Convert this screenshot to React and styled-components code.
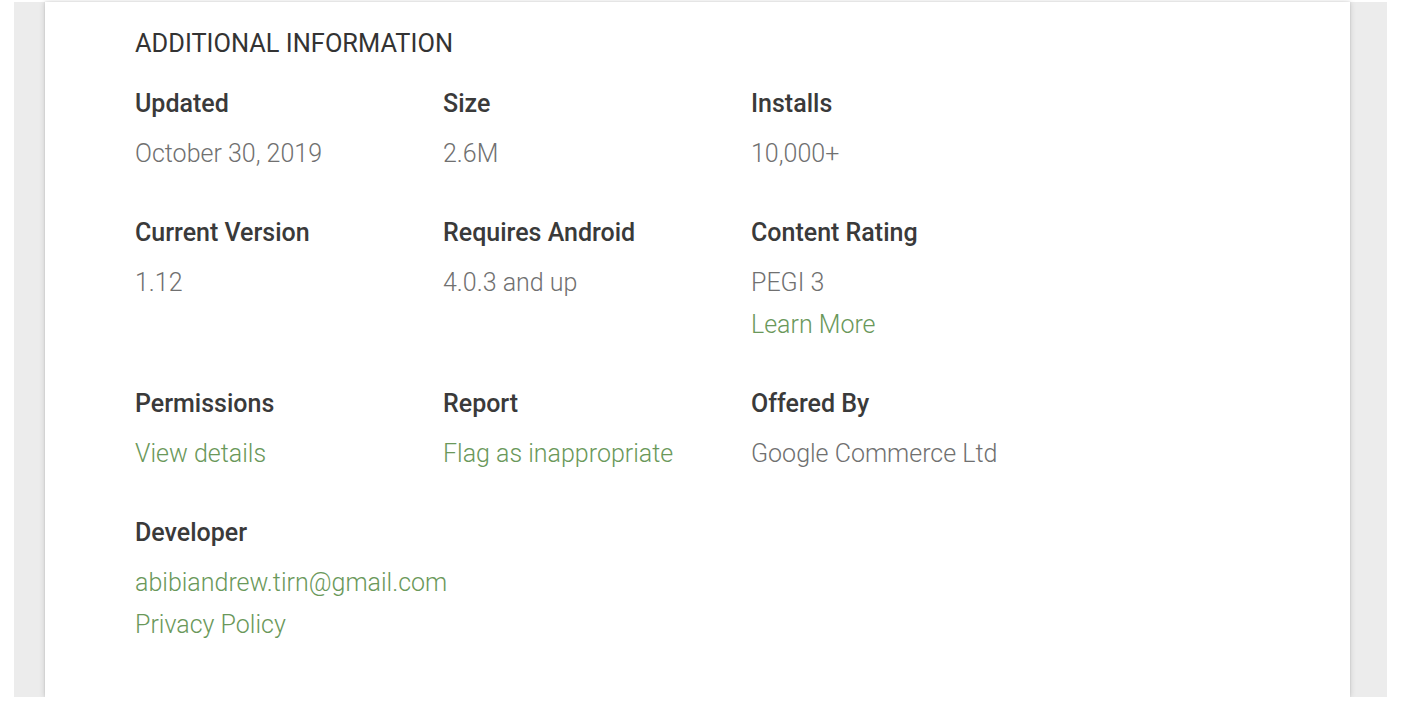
import React from 'react';
import styled, { createGlobalStyle } from 'styled-components';

const GlobalStyle = createGlobalStyle`
  html, body {
    margin: 0;
    padding: 0;
    background: #ffffff;
    font-family: Roboto, 'Liberation Sans', Arial, sans-serif;
  }
`;

const info = [
  { label: 'Updated', values: [{ text: 'October 30, 2019' }] },
  { label: 'Size', values: [{ text: '2.6M' }] },
  { label: 'Installs', values: [{ text: '10,000+' }] },
  { label: 'Current Version', values: [{ text: '1.12' }] },
  { label: 'Requires Android', values: [{ text: '4.0.3 and up' }] },
  {
    label: 'Content Rating',
    values: [{ text: 'PEGI 3' }, { text: 'Learn More', link: true }]
  },
  { label: 'Permissions', values: [{ text: 'View details', link: true }] },
  { label: 'Report', values: [{ text: 'Flag as inappropriate', link: true }] },
  { label: 'Offered By', values: [{ text: 'Google Commerce Ltd' }] },
  {
    label: 'Developer',
    values: [
      { text: 'abibiandrew.tirn@gmail.com', link: true },
      { text: 'Privacy Policy', link: true }
    ]
  }
];

function App() {
  return (
    <>
      <GlobalStyle />
      <PageBackdrop>
        <Card>
          <SectionTitle>Additional Information</SectionTitle>
          <InfoGrid>
            {info.map((item) => (
              <InfoCell key={item.label}>
                <Label>{item.label}</Label>
                {item.values.map((v) => (
                  <Value key={v.text} $link={v.link}>
                    {v.text}
                  </Value>
                ))}
              </InfoCell>
            ))}
          </InfoGrid>
        </Card>
      </PageBackdrop>
    </>
  );
}

const PageBackdrop = styled.div`
  margin: 2px 0 0 14px;
  width: 1373px;
  height: 695px;
  background: #ececec;
  display: flex;
  padding: 0 37px 0 31px;
  box-sizing: border-box;
`;

const Card = styled.section`
  flex: 1;
  background: #ffffff;
  box-shadow: 0 0 6px rgba(0, 0, 0, 0.16), 0 0 2px rgba(0, 0, 0, 0.1);
  padding: 26px 0 0 90px;
  box-sizing: border-box;
`;

const SectionTitle = styled.h2`
  margin: 0 0 31px;
  font-size: 25.4px;
  line-height: 30px;
  font-weight: 400;
  text-transform: uppercase;
  color: #333333;
`;

const InfoGrid = styled.div`
  display: grid;
  grid-template-columns: repeat(3, 308px);
  row-gap: 43px;
`;

const InfoCell = styled.div`
  display: flex;
  flex-direction: column;
`;

const Label = styled.div`
  font-size: 25px;
  line-height: 30px;
  font-weight: 500;
  color: #3a3a3a;
  margin-bottom: 14px;
`;

const Value = styled.div`
  font-size: 25px;
  line-height: 42px;
  font-weight: 300;
  color: ${(p) => (p.$link ? '#6a985a' : '#707070')};
`;

export default App;
